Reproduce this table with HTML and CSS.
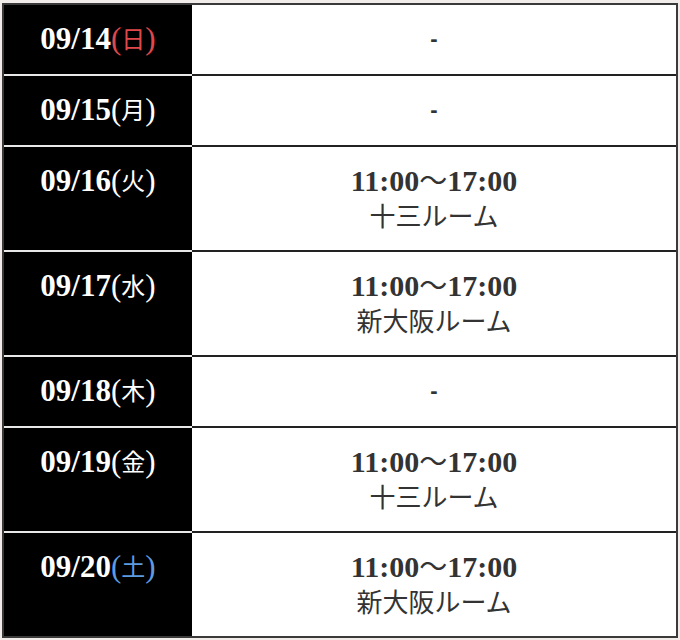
FILE: index.html
```html
<!DOCTYPE html>
<html lang="ja">
<head>
<meta charset="utf-8">
<title>Schedule</title>
<link rel="stylesheet" href="styles.css">
</head>
<body>
<div class="schedule">
  <div class="row">
    <div class="date">09/14<span class="wd sun">(<span class="jp">日</span>)</span></div>
    <div class="info"><span class="dash">-</span></div>
  </div>
  <div class="row">
    <div class="date">09/15<span class="wd">(<span class="jp">月</span>)</span></div>
    <div class="info"><span class="dash">-</span></div>
  </div>
  <div class="row">
    <div class="date">09/16<span class="wd">(<span class="jp">火</span>)</span></div>
    <div class="info"><span class="time">11:00<span class="tilde">〜</span>17:00</span><span class="room">十三ルーム</span></div>
  </div>
  <div class="row">
    <div class="date">09/17<span class="wd">(<span class="jp">水</span>)</span></div>
    <div class="info"><span class="time">11:00<span class="tilde">〜</span>17:00</span><span class="room">新大阪ルーム</span></div>
  </div>
  <div class="row">
    <div class="date">09/18<span class="wd">(<span class="jp">木</span>)</span></div>
    <div class="info"><span class="dash">-</span></div>
  </div>
  <div class="row">
    <div class="date">09/19<span class="wd">(<span class="jp">金</span>)</span></div>
    <div class="info"><span class="time">11:00<span class="tilde">〜</span>17:00</span><span class="room">十三ルーム</span></div>
  </div>
  <div class="row">
    <div class="date">09/20<span class="wd sat">(<span class="jp">土</span>)</span></div>
    <div class="info"><span class="time">11:00<span class="tilde">〜</span>17:00</span><span class="room">新大阪ルーム</span></div>
  </div>
</div>
</body>
</html>
```

FILE: styles.css
```css
html, body {
  margin: 0;
  padding: 0;
  background: #f1ece9;
}

body {
  padding: 3px 2px 0 2px;
  font-family: "Liberation Serif", "Noto Sans CJK JP", serif;
}

.schedule {
  width: 672px;
  border: 2px solid #3a3a3a;
  background: #fff;
}

.row {
  display: grid;
  grid-template-columns: 188px 1fr;
}

.row + .row .date {
  border-top: 2px solid #e8e8e8;
}

.row + .row .info {
  border-top: 2px solid #222;
}

.date {
  background: #000;
  color: #fff;
  font-size: 31px;
  font-weight: 700;
  line-height: 34px;
  text-align: center;
  padding: 17px 0 18px;
}

.wd {
  font-weight: 400;
  line-height: 20px;
}

.jp {
  font-family: "Noto Sans CJK JP", sans-serif;
  font-size: 24px;
  font-weight: 400;
  line-height: 20px;
  vertical-align: 1px;
}

.sun {
  color: #e0484c;
}

.sat {
  color: #5d9be0;
}

.info {
  display: flex;
  flex-direction: column;
  align-items: center;
  padding: 17px 0 18px;
  color: #333;
  text-align: center;
}

.dash {
  font-family: "Liberation Sans", sans-serif;
  font-size: 22px;
  line-height: 34px;
  height: 34px;
  font-weight: 700;
  color: #333;
}

.time {
  font-size: 30px;
  line-height: 34px;
  height: 34px;
  font-weight: 700;
}

.tilde {
  font-family: "Noto Sans CJK JP", sans-serif;
  font-weight: 400;
  font-size: 28px;
  line-height: 20px;
}

.room {
  font-family: "Noto Sans CJK JP", sans-serif;
  font-size: 26px;
  line-height: 34px;
  height: 34px;
  font-weight: 400;
  color: #333;
}
```
